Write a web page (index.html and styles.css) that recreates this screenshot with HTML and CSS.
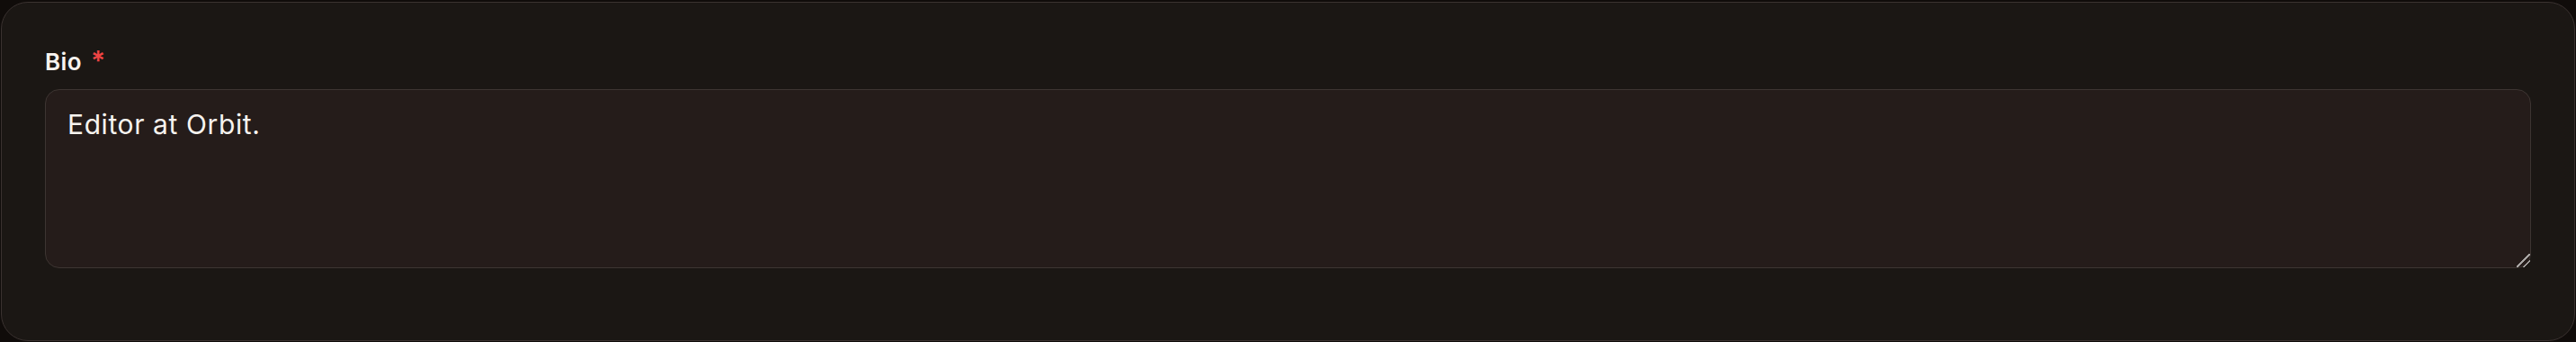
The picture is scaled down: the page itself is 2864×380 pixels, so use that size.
FILE: index.html
```html
<!DOCTYPE html>
<html lang="en">

<head>
          <meta charset="UTF-8">
          <meta name="viewport" content="width=device-width, initial-scale=1.0">
          <title>Profile</title>
          <link rel="stylesheet" href="styles.css">
</head>

<body>
          <div class="card">
                    <label class="field-label" for="bio">Bio <span class="required">*</span></label>
                    <textarea id="bio" class="field-input" rows="3">Editor at Orbit.</textarea>
          </div>
</body>

</html>
```

FILE: styles.css
```css
html {
          color-scheme: dark;
}

body {
          margin: 0;
          padding: 2px 1px 1px 1px;
          background-color: #100c0a;
          font-family: Inter, "Noto Sans", sans-serif;
}

.card {
          box-sizing: border-box;
          height: 377px;
          display: flex;
          flex-direction: column;
          gap: 12px;
          padding: 48px 48px 80px;
          background-color: #1b1714;
          border: 1px solid #3a3230;
          border-radius: 30px;
}

.field-label {
          font-size: 26px;
          line-height: 36px;
          font-weight: 600;
          letter-spacing: 0.4px;
          color: #f7f3ef;
}

.required {
          color: #ef4444;
          font-size: 30px;
          line-height: 0;
          margin-left: 3px;
}

.field-input {
          box-sizing: border-box;
          width: 100%;
          height: 200px;
          padding: 14px 24px;
          font-family: inherit;
          font-size: 30px;
          line-height: 48px;
          letter-spacing: 0.6px;
          color: #f7f3ef;
          background-color: #251c1a;
          border: 1px solid #3d3532;
          border-radius: 16px;
          outline: none;
          resize: vertical;
}

.field-input::-webkit-resizer {
          background: linear-gradient(135deg, transparent 0 46%, #a9a6a4 46% 54%, transparent 54% 72%, #a9a6a4 72% 80%, transparent 80%);
}
```
